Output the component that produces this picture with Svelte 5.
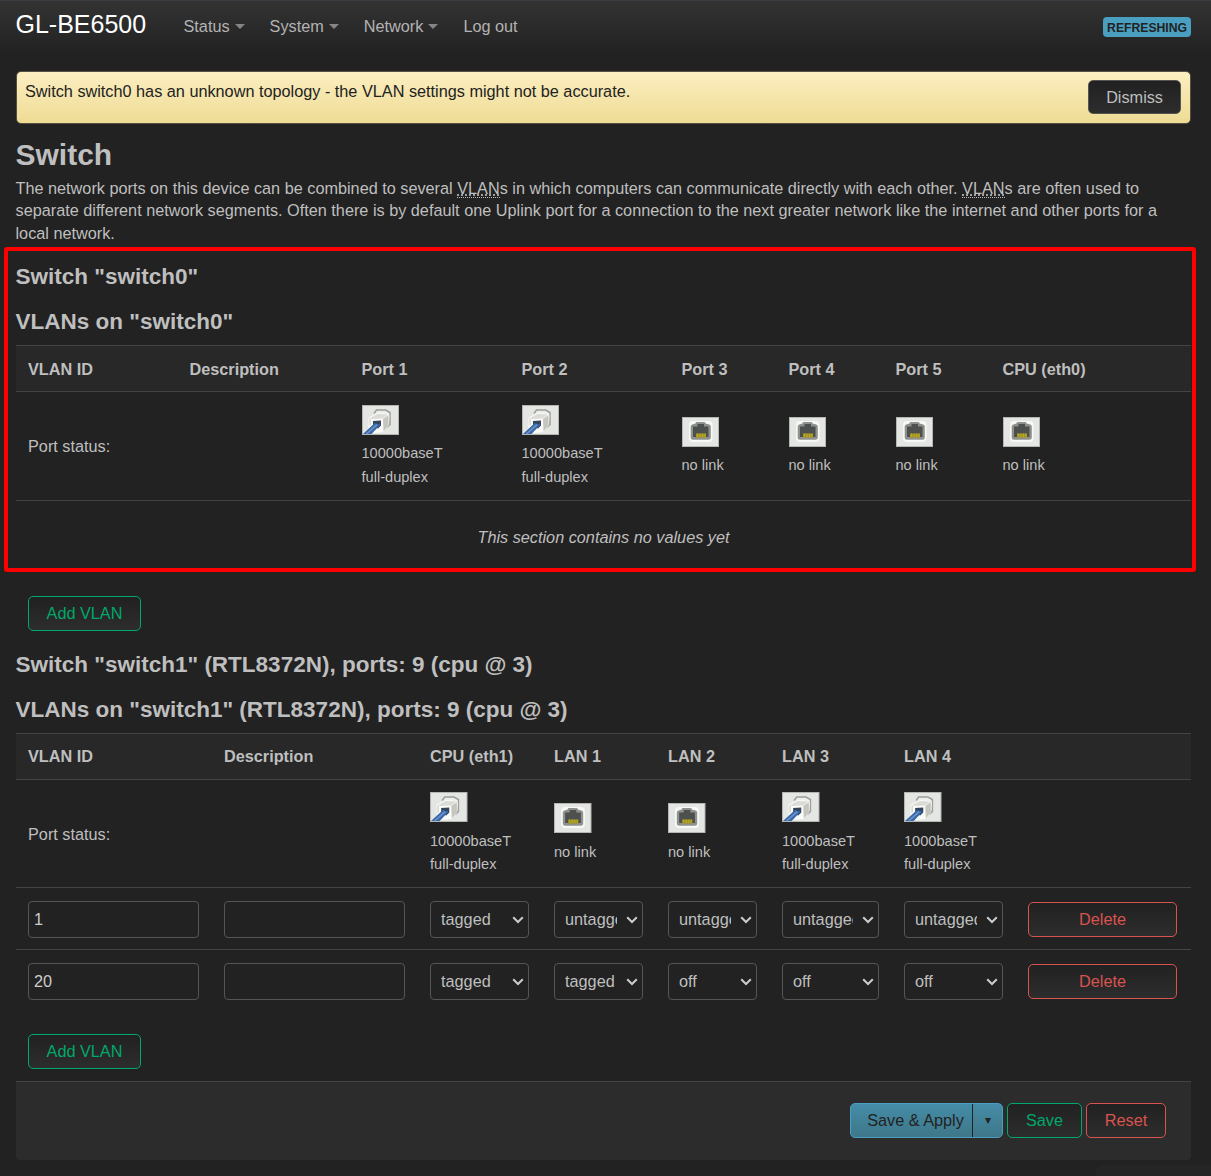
<script>
	const menu = [
		{ label: 'Status', sub: true },
		{ label: 'System', sub: true },
		{ label: 'Network', sub: true },
		{ label: 'Log out', sub: false }
	];

	const modes = ['off', 'untagged', 'tagged'];

	const switch0 = [
		{ name: 'Port 1', speed: '10000baseT' },
		{ name: 'Port 2', speed: '10000baseT' },
		{ name: 'Port 3' },
		{ name: 'Port 4' },
		{ name: 'Port 5' },
		{ name: 'CPU (eth0)' }
	];

	const switch1 = [
		{ name: 'CPU (eth1)', speed: '10000baseT' },
		{ name: 'LAN 1' },
		{ name: 'LAN 2' },
		{ name: 'LAN 3', speed: '1000baseT' },
		{ name: 'LAN 4', speed: '1000baseT' }
	];

	let vlans = $state([
		{ id: '1', descr: '', ports: ['tagged', 'untagged', 'untagged', 'untagged', 'untagged'] },
		{ id: '20', descr: '', ports: ['tagged', 'tagged', 'off', 'off', 'off'] }
	]);

	let showAlert = $state(true);

	function addVlan() {
		vlans.push({ id: '', descr: '', ports: ['tagged', 'off', 'off', 'off', 'off'] });
	}

	function removeVlan(i) {
		vlans.splice(i, 1);
	}
</script>

{#snippet portIcon(up)}
	<svg class="port-icon" viewBox="0 0 37 30" preserveAspectRatio="none">
		<rect x=".5" y=".5" width="36" height="29" fill="#e4e6e3" stroke="#b4b6b2" />
		{#if up}
			<path d="M12 8.500l2.500-3.500h9l4.500 2.500v12l-3 3" fill="#eeefec" stroke="#9b9d98" stroke-width="1.500" />
			<path d="M6.500 14q0-2 2-2.500L16 8l10 1q1.500 0 1.500 2l-1 10-5.500 6-8 1-6.500-3z" fill="#fafaf8" />
			<path d="M21 14l5.500-4v10.500l-5 6z" fill="#c6c5be" />
			<path d="M8 13l7.500-4 10.500.5-5 4-10.500.5z" fill="#dcdcd6" />
			<path d="M8 13.500v7" fill="none" stroke="#c4c4be" />
			<path d="M11 16l8-.5v5l-3 3-5-2z" fill="#34465e" />
			<path d="M1 29L12.500 18.200l6 1.300L9.500 29z" fill="#3868aa" />
			<path d="M4.500 29L15 19.700" stroke="#6d94c8" stroke-width="1.600" />
		{:else}
			<rect x="7" y="4" width="23.500" height="21" rx="4" fill="#f8f9f7" />
			<path d="M14.500 5h8q1 0 1 1.500l3 .7q2.300.3 2.300 2.300v11q0 2.300-2.300 2.300H11q-2.300 0-2.300-2.300v-11q0-2 2.300-2.300l2.500-.7Q13.500 5 14.500 5z" fill="#8f918c" />
			<path d="M15.500 7h6.500v2.500h4.500v10.500H11V9.500h4.500z" fill="#4c504e" />
			<path d="M14 16.500h10v4H14z" fill="#a3941f" />
			<path d="M15.500 16.500v3.500M18 16.500v3.500M20.500 16.500v3.500M23 16.500v3.500" stroke="#b9a928" />
		{/if}
	</svg>
{/snippet}

{#snippet tableHead(ports)}
	<div class="tr titles">
		<div class="th">VLAN ID</div>
		<div class="th">Description</div>
		{#each ports as port}
			<div class="th">{port.name}</div>
		{/each}
	</div>
	<div class="tr status">
		<div class="td">Port status:</div>
		<div class="td"></div>
		{#each ports as port}
			<div class="td link">
				{@render portIcon(!!port.speed)}
				{#if port.speed}
					<small>{port.speed}</small>
					<small>full-duplex</small>
				{:else}
					<small>no link</small>
				{/if}
			</div>
		{/each}
	</div>
{/snippet}

<header>
	<a class="brand" href="/">GL-BE6500</a>
	<nav>
		{#each menu as item}
			<a href="/" class:dropdown={item.sub}>{item.label}</a>
		{/each}
	</nav>
	<span class="indicator">REFRESHING</span>
</header>

<main>
	{#if showAlert}
		<div class="alert">
			<p>Switch switch0 has an unknown topology - the VLAN settings might not be accurate.</p>
			<button class="btn" onclick={() => (showAlert = false)}>Dismiss</button>
		</div>
	{/if}

	<h2>Switch</h2>
	<p class="descr">
		The network ports on this device can be combined to several <abbr>VLAN</abbr>s in which computers can communicate directly with each other. <abbr>VLAN</abbr>s are often used to separate different network segments. Often there is by default one Uplink port for a connection to the next greater network like the internet and other ports for a local network.
	</p>

	<section class="marked">
		<h3>Switch "switch0"</h3>
		<h3>VLANs on "switch0"</h3>
		<div class="table first">
			{@render tableHead(switch0)}
			<div class="placeholder"><em>This section contains no values yet</em></div>
		</div>
	</section>
	<div class="create">
		<button class="btn add">Add VLAN</button>
	</div>

	<section>
		<h3>Switch "switch1" (RTL8372N), ports: 9 (cpu @ 3)</h3>
		<h3>VLANs on "switch1" (RTL8372N), ports: 9 (cpu @ 3)</h3>
		<div class="table second">
			{@render tableHead(switch1)}
			{#each vlans as vlan, i}
				<div class="tr vlan">
					<div class="td"><input type="text" bind:value={vlan.id} /></div>
					<div class="td"><input type="text" bind:value={vlan.descr} /></div>
					{#each vlan.ports as mode, p}
						<div class="td">
							<div class="select">
								<select bind:value={vlan.ports[p]}>
									{#each modes as m}
										<option value={m}>{m}</option>
									{/each}
								</select>
								<svg viewBox="0 0 12 8"><path d="M1.200 1.200L6 6l4.800-4.800" /></svg>
							</div>
						</div>
					{/each}
					<div class="td"><button class="btn remove" onclick={() => removeVlan(i)}>Delete</button></div>
				</div>
			{/each}
		</div>
	</section>
	<div class="create">
		<button class="btn add" onclick={addVlan}>Add VLAN</button>
	</div>

	<div class="page-actions">
		<div class="split">
			<button class="apply">Save &amp; Apply</button>
			<button class="more">▾</button>
		</div>
		<button class="btn add save">Save</button>
		<button class="btn remove reset">Reset</button>
	</div>
</main>
<div class="tip"></div>

<style>
	:global(body) {
		background: #222;
		color: #bfbfbf;
		font: 16.25px/22.5px "Liberation Sans", Arial, sans-serif;
	}

	:global(#app) {
		position: relative;
		height: 1176px;
		overflow: hidden;
	}

	header {
		display: flex;
		height: 53px;
		padding: 0 20px 0 15.5px;
		box-sizing: border-box;
		align-items: center;
		background: linear-gradient(#333, #222);
		border-top: 1px solid #3b3b42;
	}

	header a {
		color: #b3b3b3;
		text-decoration: none;
	}

	header .brand {
		width: 168px;
		margin-top: -5px;
		color: #fff;
		font-size: 25px;
	}

	nav {
		display: flex;
		flex: 1;
		gap: 25px;
		margin-top: -1px;
	}

	.dropdown::after {
		content: '';
		display: inline-block;
		margin-left: 5px;
		vertical-align: 3px;
		border: 5px solid transparent;
		border-top-color: #858585;
		border-bottom: 0;
	}

	.indicator {
		height: 20px;
		padding: 0 4px;
		border-radius: 4px;
		background: #4a9fc0;
		color: #222;
		font-size: 12.2px;
		font-weight: bold;
		line-height: 22px;
	}

	main {
		width: 1175px;
		margin: 18px 0 0 16px;
	}

	.alert {
		display: flex;
		justify-content: space-between;
		height: 53px;
		box-sizing: border-box;
		padding: 8px 9px 8px 8px;
		margin-bottom: 7.6px;
		border: 1px solid #555042;
		border-radius: 5px;
		background: linear-gradient(#fceec1, #eedc94);
		color: #222;
	}

	p {
		margin: 0;
	}

	h2 {
		margin: 0;
		font-size: 30px;
		line-height: 45px;
	}

	h3 {
		margin: 0;
		font-size: 22.5px;
		line-height: 44px;
		padding-bottom: 1px;
	}

	h2,
	h3,
	.descr {
		margin-left: -.5px;
	}

	.descr {
		margin-bottom: 10.6px;
	}

	abbr {
		border-bottom: 1px dotted #bbb;
		text-decoration: underline dotted;
	}

	section {
		position: relative;
	}

	/* highlight frame around the affected switch */
	.marked::after {
		content: '';
		position: absolute;
		inset: -8px -4.5px 1px -12px;
		border: 4px solid #f00;
		border-radius: 3px;
	}

	.tr {
		display: grid;
		box-sizing: border-box;
		border-top: 1px solid #444;
		align-items: center;
	}

	.first .tr {
		grid-template-columns: 161.5px 172px 160px 160px 107px 107px 107px 1fr;
	}

	.second .tr {
		grid-template-columns: 196px 206px 124px 114px 114px 122px 124px 175px;
	}

	.th,
	.td {
		padding: 0 13px 0 12px;
	}

	.titles {
		height: 46px;
		background: #282828;
		font-weight: bold;
	}

	.first .titles {
		padding-top: 1.5px;
	}

	.status {
		height: 109px;
		padding-top: 2px;
	}

	.second .status {
		height: 108px;
		padding-top: 1.5px;
	}

	.vlan {
		height: 62px;
		padding-top: 2px;
	}

	.link {
		display: flex;
		flex-direction: column;
	}

	.port-icon {
		width: 37px;
		height: 30px;
		margin-bottom: 6px;
	}

	.second .port-icon {
		width: 37.5px;
		margin-bottom: 8px;
	}

	small {
		font-size: 14.6px;
		line-height: 24px;
	}

	.second small {
		line-height: 23px;
	}

	.placeholder {
		height: 73px;
		border-top: 1px solid #444;
		box-sizing: border-box;
		line-height: 73px;
		text-align: center;
	}

	.create {
		padding: 23px 12px 12px;
		display: flex;
	}

	.create .btn {
		width: 113px;
	}

	.btn {
		height: 35px;
		box-sizing: border-box;
		padding: 0 17px;
		border: 1px solid #555;
		border-radius: 5px;
		background: linear-gradient(#212121, #2d2d2d);
		color: #bfbfbf;
		font: inherit;
	}

	.btn.add {
		border-color: #00a86b;
		color: #00a86b;
	}

	.btn.remove {
		border-color: #d9534f;
		color: #d9534f;
	}

	.td .btn {
		display: block;
		width: 149px;
	}

	.alert .btn {
		height: 34px;
	}

	input,
	select {
		display: block;
		width: 100%;
		height: 37px;
		box-sizing: border-box;
		padding: 0 5px;
		border: 1px solid #555;
		border-radius: 4px;
		background: #222;
		color: #ccc;
		font: inherit;
	}

	.select {
		display: grid;
		align-items: center;
	}

	.select > * {
		grid-area: 1 / 1;
	}

	select {
		appearance: none;
		padding: 0 25px 0 10px;
		color: #bfbfbf;
	}

	.vlan:last-child select {
		padding-top: 1px;
	}

	.select svg {
		width: 12px;
		height: 8px;
		margin: 1px 5px 0 0;
		justify-self: end;
		pointer-events: none;
		fill: none;
		stroke: #ccc;
		stroke-width: 2;
	}

	.page-actions {
		display: flex;
		justify-content: flex-end;
		gap: 4px;
		height: 79px;
		box-sizing: border-box;
		padding: 21px 25px 0 0;
		border-top: 1px solid #444;
		border-radius: 0 0 4px 4px;
		background: #2c2c2c;
	}

	.save {
		width: 75px;
	}

	.reset {
		width: 80px;
	}

	.split {
		display: flex;
		height: 35px;
		box-sizing: border-box;
		border: 1px solid #4a9fc0;
		border-radius: 5px;
		background: linear-gradient(#458ca8, #3e7789);
	}

	.split button {
		padding: 0;
		border: 0;
		background: none;
		color: #222;
		font: inherit;
	}

	.split .apply {
		width: 121px;
		padding-left: 8px;
	}

	.split .more {
		width: 30px;
		border-left: 1px solid #222;
		font-size: 12px;
	}

	/* corner of the collapsed status popup */
	.tip {
		position: absolute;
		right: 0;
		bottom: 0;
		width: 115px;
		height: 11px;
		border-radius: 5px 0 0;
		background: #252525;
	}
</style>
